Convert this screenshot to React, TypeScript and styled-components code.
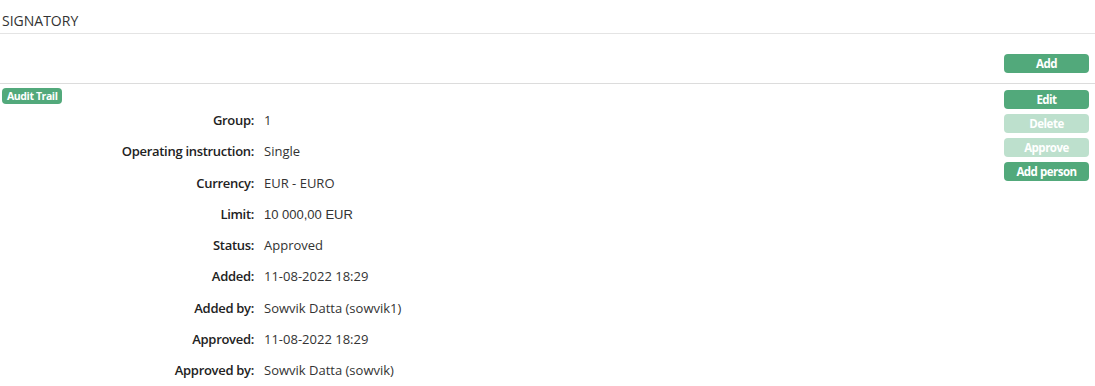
import styled, { createGlobalStyle } from "styled-components";

type Detail = {
  label: string;
  value: string;
  mono?: boolean;
};

const details: Detail[] = [
  { label: "Group", value: "1" },
  { label: "Operating instruction", value: "Single" },
  { label: "Currency", value: "EUR - EURO" },
  { label: "Limit", value: "10 000,00 EUR", mono: true },
  { label: "Status", value: "Approved" },
  { label: "Added", value: "11-08-2022 18:29" },
  { label: "Added by", value: "Sowvik Datta (sowvik1)" },
  { label: "Approved", value: "11-08-2022 18:29" },
  { label: "Approved by", value: "Sowvik Datta (sowvik)" },
];

export default function App() {
  return (
    <>
      <GlobalStyle />
      <Page>
        <Header>
          <Title>SIGNATORY</Title>
        </Header>
        <Toolbar>
          <Button>Add</Button>
        </Toolbar>
        <Body>
          <Left>
            <Badge>Audit Trail</Badge>
            <Table>
              {details.map((d) => (
                <Row key={d.label}>
                  <Label>{d.label}:</Label>
                  <Value $alt={d.mono}>{d.value}</Value>
                </Row>
              ))}
            </Table>
          </Left>
          <Actions>
            <Button>Edit</Button>
            <Button disabled>Delete</Button>
            <Button disabled>Approve</Button>
            <Button>Add person</Button>
          </Actions>
        </Body>
      </Page>
    </>
  );
}

const GlobalStyle = createGlobalStyle`
  body {
    margin: 0;
    background: #fff;
    font-family: "Open Sans", "Noto Sans", sans-serif;
    color: #333;
  }
`;

const Page = styled.div`
  width: 1095px;
`;

const Header = styled.div`
  height: 33px;
  border-bottom: 1px solid #e4e4e4;
  display: flex;
  align-items: center;
  padding-left: 2px;
`;

const Title = styled.h1`
  margin: 8px 0 0;
  font-size: 14px;
  font-weight: 400;
  color: #333;
`;

const Toolbar = styled.div`
  display: flex;
  justify-content: flex-end;
  padding: 20px 6px 10px 0;
  border-bottom: 1px solid #dcdcdc;
`;

const Button = styled.button`
  width: 85px;
  height: 19px;
  border: none;
  border-radius: 4px;
  background: ${(p) => (p.disabled ? "#bde0cd" : "#52a97b")};
  color: #fff;
  font-family: "Open Sans", sans-serif;
  font-size: 11.5px;
  font-weight: 700;
  letter-spacing: -0.5px;
  padding: 0;
  cursor: ${(p) => (p.disabled ? "default" : "pointer")};
`;

const Body = styled.div`
  display: flex;
  justify-content: space-between;
  padding: 4px 6px 0 2px;
`;

const Left = styled.div`
  display: flex;
  flex-direction: column;
  align-items: flex-start;
`;

const Badge = styled.span`
  background: #52a97b;
  color: #fff;
  font-size: 10.5px;
  font-weight: 700;
  letter-spacing: -0.4px;
  border-radius: 4px;
  padding: 1px 5px;
  line-height: 14px;
`;

const Table = styled.div`
  display: grid;
  grid-template-columns: 252px auto;
  column-gap: 10px;
  margin-top: 1px;
`;

const Row = styled.div`
  display: contents;
`;

const Label = styled.div`
  text-align: right;
  font-size: 13px;
  font-weight: 600;
  color: #222;
  line-height: 31.3px;
  letter-spacing: -0.3px;
`;

const Value = styled.div<{ $alt?: boolean }>`
  font-size: 13px;
  line-height: 31.3px;
  color: #333;
  font-family: ${(p) => (p.$alt ? '"Liberation Sans", Arial, sans-serif' : "inherit")};
`;

const Actions = styled.div`
  display: flex;
  flex-direction: column;
  gap: 5px;
  padding-top: 2px;
`;
